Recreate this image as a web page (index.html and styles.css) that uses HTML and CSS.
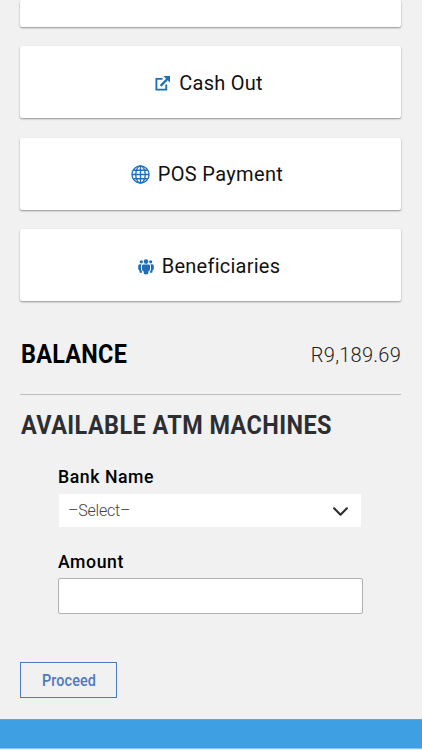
FILE: index.html
```html
<!DOCTYPE html>
<html lang="en">
<head>
    <meta charset="UTF-8">
    <meta name="viewport" content="width=device-width, initial-scale=1.0">
    <title>Wallet</title>
    <link rel="stylesheet" href="styles.css">
</head>
<body>

    <main class="container">
        <nav class="menu">
            <div class="card card-cut"></div>
            <a class="card" href="#">
                <svg class="icon-out" viewBox="0 0 16 16">
                    <path d="M8 3H1.500v11.500H12V9" fill="none" stroke="currentColor" stroke-width="2"/>
                    <path d="M6 10.500L13.500 3" fill="none" stroke="currentColor" stroke-width="2.400"/>
                    <path d="M9 0h7v7l-2-2-3-3z"/>
                </svg>
                <span>Cash Out</span>
            </a>
            <a class="card card-pos" href="#">
                <svg class="icon-globe" viewBox="0 0 20 20" fill="none" stroke="currentColor" stroke-width="1.4">
                    <circle cx="10" cy="10" r="9"/>
                    <ellipse cx="10" cy="10" rx="5" ry="9"/>
                    <path d="M10 1v18M1 10h18M2.5 5.5h15M2.5 14.5h15"/>
                </svg>
                <span>POS Payment</span>
            </a>
            <a class="card" href="#">
                <svg class="icon-group" viewBox="0 0 16 16">
                    <circle cx="8" cy="2.600" r="2.300"/>
                    <circle cx="3.300" cy="2.800" r="1.600"/>
                    <circle cx="12.700" cy="2.800" r="1.600"/>
                    <path d="M5.300 5.600h5.400q1.300 0 1.300 1.400v3q0 1.700-1.500 2.200l-.5 2.900q-2 .9-4 0l-.5-2.900Q4 11.700 4 10V7q0-1.400 1.300-1.400z"/>
                    <path d="M3.600 5.200H1.800Q.2 5.400.2 7v2.500q0 1.500 1.200 2l.3 2.200h2.400l-.3-1.600Q3 11.200 3 10V7q0-1 .6-1.800zM12.400 5.200h1.800q1.600.2 1.600 1.800v2.500q0 1.500-1.200 2l-.3 2.200h-2.400l.3-1.600Q13 11.200 13 10V7q0-1-.6-1.800z"/>
                </svg>
                <span>Beneficiaries</span>
            </a>
        </nav>

        <section class="balance">
            <h2><span class="narrow">BALANCE</span></h2>
            <span class="amount">R9,189.69</span>
        </section>

        <h2 class="atm-title"><span class="narrow">AVAILABLE ATM MACHINES</span></h2>

        <form>
            <div class="fields">
                <label for="bank"><span class="narrow">Bank Name</span></label>
                <button type="button" class="select" id="bank">
                    <span>–Select–</span>
                    <svg class="chevron" viewBox="0 0 14 8">
                        <path d="M1 1l6 6 6-6" fill="none" stroke="currentColor" stroke-width="2" stroke-linecap="round" stroke-linejoin="round"/>
                    </svg>
                </button>
                <label for="amount"><span class="narrow">Amount</span></label>
                <input type="text" id="amount">
            </div>
            <button type="submit" class="proceed"><span class="narrow">Proceed</span></button>
        </form>
    </main>

    <footer class="footer"></footer>

</body>
</html>
```

FILE: styles.css
```css
* {
    box-sizing: border-box;
}

body {
    margin: 0;
    height: 750px;
    overflow: hidden;
    background-color: #f1f1f1;
    font-family: 'Roboto', sans-serif;
    color: #000000;
}

.container {
    height: 719px;
    padding: 0 21px 0 20px;
}

/* Menu cards */
.menu {
    display: flex;
    flex-direction: column;
    gap: 19.6px;
}

.card {
    display: flex;
    align-items: center;
    justify-content: center;
    height: 72px;
    padding: 1px 3px 0 0;
    background-color: #ffffff;
    border-radius: 2px;
    box-shadow: 0 1px 2px rgba(0, 0, 0, 0.4);
    color: #111111;
    font-size: 20px;
    letter-spacing: 0.25px;
    text-decoration: none;
}

.card-cut {
    height: 26.5px;
}

.card-pos {
    padding-right: 7px;
    letter-spacing: 0.35px;
}

.card svg {
    color: #1f6fb8;
    fill: currentColor;
    flex: none;
}

.card .icon-out {
    width: 15px;
    height: 15px;
    margin: 2px 9px 0 0;
}

.card .icon-globe {
    width: 19px;
    height: 19px;
    margin-right: 8px;
    fill: none;
}

.card .icon-group {
    width: 16px;
    height: 16px;
    margin: 2px 8px 0 0;
}

/* Slightly condensed headings */
.narrow {
    display: inline-block;
    transform: scaleX(0.9);
    transform-origin: left center;
    letter-spacing: 0.3px;
    white-space: nowrap;
}

h2 {
    margin: 0;
    padding-left: 0.5px;
    font-size: 26px;
    line-height: 32px;
    font-weight: 700;
}

.balance {
    display: flex;
    align-items: center;
    justify-content: space-between;
    height: 93.5px;
    padding-top: 13px;
    border-bottom: 1px solid #bfbfbf;
}

.balance .amount {
    padding-top: 1px;
    font-size: 20px;
    font-weight: 300;
    letter-spacing: 0.25px;
    color: #222222;
}

.atm-title {
    margin-top: 14px;
    color: #2d2e32;
}

.atm-title .narrow {
    letter-spacing: 0.5px;
}

/* Form */
.fields {
    margin: 24px 18px 0 38px;
}

label {
    display: block;
    height: 29px;
    line-height: 24px;
    font-size: 19px;
    font-weight: 500;
}

label .narrow {
    transform: scaleX(0.93);
    letter-spacing: 0.6px;
}

.select {
    display: flex;
    align-items: center;
    justify-content: space-between;
    width: 302px;
    height: 33px;
    margin: 0 1px 23px;
    padding: 0 13px 0 9px;
    border: none;
    background-color: #ffffff;
    font-family: inherit;
    font-size: 16px;
    font-weight: 300;
    letter-spacing: -0.2px;
    color: #444444;
}

.chevron {
    width: 15px;
    height: 9px;
    margin-top: 2px;
    color: #2d2e32;
}

input {
    display: block;
    width: 305px;
    height: 36px;
    margin-top: -1px;
    border: 1px solid #b0b0b0;
    border-radius: 2px;
    background-color: #ffffff;
}

.proceed {
    display: block;
    width: 97px;
    height: 36px;
    margin-top: 48px;
    padding: 1px 0 0;
    border: 1px solid #5078bd;
    background: none;
    font-family: inherit;
    font-size: 16px;
    font-weight: 500;
    color: #5078bd;
}

.proceed .narrow {
    transform-origin: center;
    letter-spacing: 0.1px;
}

.footer {
    height: 30px;
    background-color: #3e9fe2;
    border-top: 1px solid #6ba3ca;
    border-bottom: 1px solid #8cc1ec;
}
```
